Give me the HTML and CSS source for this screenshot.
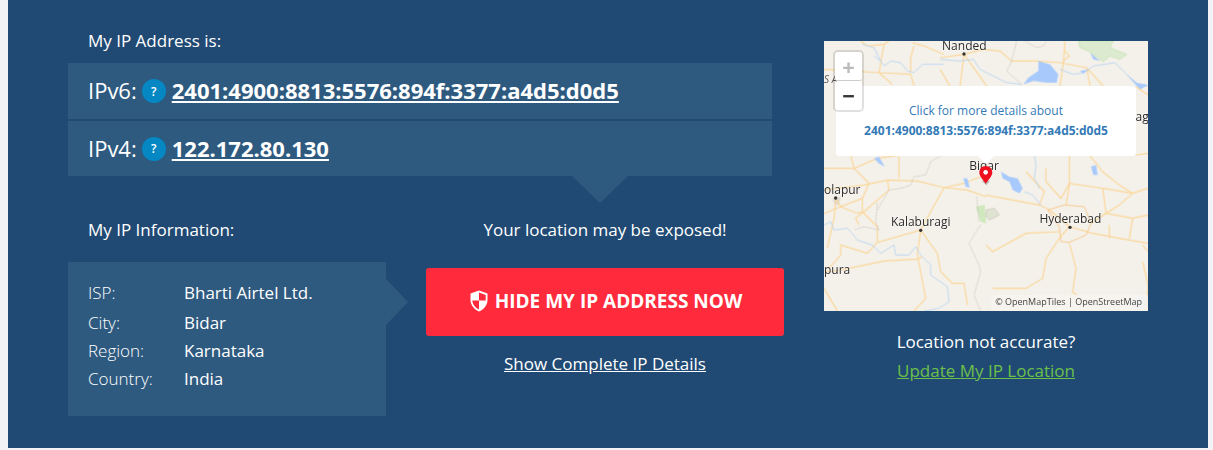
FILE: index.html
```html
<!DOCTYPE html>
<html lang="en">
<head>
    <meta charset="UTF-8">
    <title>My IP Address</title>
    <link rel="stylesheet" href="styles.css">
</head>
<body>
    <div class="panel">
        <div class="main">
            <div class="label label-top">My IP Address is:</div>
            <div class="ip-row">
                <span class="ip-name">IPv6:</span>
                <span class="help">?</span>
                <a class="ip-value" href="#">2401:4900:8813:5576:894f:3377:a4d5:d0d5</a>
            </div>
            <div class="ip-row ip-row-last">
                <span class="ip-name">IPv4:</span>
                <span class="help">?</span>
                <a class="ip-value" href="#">122.172.80.130</a>
            </div>
            <div class="lower">
                <div class="info-col">
                    <div class="label label-info">My IP Information:</div>
                    <div class="info-box">
                        <div class="info-line info-line-first"><span class="info-key">ISP:</span><span class="info-val">Bharti Airtel Ltd.</span></div>
                        <div class="info-line"><span class="info-key">City:</span><span class="info-val">Bidar</span></div>
                        <div class="info-line"><span class="info-key">Region:</span><span class="info-val">Karnataka</span></div>
                        <div class="info-line"><span class="info-key">Country:</span><span class="info-val">India</span></div>
                    </div>
                </div>
                <div class="action-col">
                    <div class="exposed">Your location may be exposed!</div>
                    <a class="hide-btn" href="#">
                        <svg class="shield" width="18" height="22" viewBox="0 0 18 22">
                            <path d="M9 0.5 L17.5 3.5 V10 C17.5 15.5 13.5 19.5 9 21.5 C4.5 19.5 0.5 15.5 0.5 10 V3.5 Z" fill="#fff"/>
                            <path d="M9 2.6 L15.7 4.9 V10.5 H9 Z M9 10.5 V19.5 C5.6 17.8 2.7 14.6 2.3 10.5 Z" fill="#ff2b3c"/>
                        </svg>
                        HIDE MY IP ADDRESS NOW
                    </a>
                    <a class="details-link" href="#">Show Complete IP Details</a>
                </div>
            </div>
        </div>
        <div class="side">
            <div class="map">
                <svg class="map-art" width="324" height="270" viewBox="12 33 972 810">
                    <defs>
                        <filter id="soft"><feGaussianBlur stdDeviation="0.7"/></filter>
                    </defs>
                    <rect x="12" y="33" width="972" height="810" fill="#f4f1ea"/>
                    <g filter="url(#soft)">
                        <!-- top left of the map -->
                        <g transform="translate(12,33)">
                            <g class="road">
                                <path d="M110 0 L130 15 L180 10 L195 0"/>
                                <path d="M180 10 L165 95 L90 90 L0 85"/>
                                <path d="M165 95 L205 130"/>
                                <path d="M165 95 L260 100 L270 135"/>
                                <path d="M270 15 L260 50 L260 95"/>
                                <path d="M265 5 L300 15 L360 40"/>
                            </g>
                            <g class="river">
                                <path d="M115 10 L150 20 L170 60 L180 75 L200 60 L230 65 L250 90 L270 95 L295 70 L360 70"/>
                                <path d="M150 45 L170 60"/>
                            </g>
                        </g>
                        <!-- top right of the map -->
                        <g transform="translate(360,33)">
                            <path d="M415 0 L520 0 L510 20 L560 40 L540 55 L510 45 L490 62 L445 30 L420 20 Z" fill="#dcebd0" stroke="#bfe0a8" stroke-width="2"/>
                            <g class="road">
                                <path d="M0 50 L72 40"/>
                                <path d="M72 40 L60 135"/>
                                <path d="M72 40 L140 135"/>
                                <path d="M72 40 L130 25 L180 30 L215 60 L290 60 L360 65 L440 80 L490 135"/>
                                <path d="M0 85 L30 135"/>
                                <path d="M375 0 L370 65 L360 135"/>
                                <path d="M375 30 L388 45 L370 60"/>
                                <path d="M440 80 L450 135"/>
                            </g>
                            <g class="river">
                                <path d="M0 55 L60 60 L100 55 L120 85 L200 125 L245 130"/>
                                <path d="M360 85 L400 100 L430 95 L460 75 L525 65 L560 100 L590 130 L624 135"/>
                            </g>
                            <g class="water">
                                <path d="M265 110 L295 90 L295 60 L330 70 L355 100 L350 125 L320 125 L280 120 L250 130 Z"/>
                                <path d="M450 35 L480 60 L460 55 Z"/>
                                <path d="M420 90 L445 86 L430 98 Z"/>
                                <path d="M560 100 L590 125 L624 132 L600 146 Z"/>
                            </g>
                            <g class="border">
                                <path d="M230 0 L215 60 L200 90 L245 130"/>
                                <path d="M255 0 L290 20 L310 15 L320 0"/>
                            </g>
                        </g>
                        <!-- right edge, beside the popup -->
                        <g class="road">
                            <path d="M948 170 L984 195"/>
                            <path d="M948 375 L984 370"/>
                        </g>
                        <!-- bottom left of the map -->
                        <g transform="translate(12,375)">
                            <path d="M455 155 L482 150 L486 205 L470 200 Z" fill="#cfe8bd"/>
                            <path d="M25 130 L50 125 L45 150 L32 150 Z" fill="#ddd9d2"/>
                            <g class="road">
                                <path d="M0 105 L120 90 L190 75 L280 78 L360 98 L420 85 L470 65"/>
                                <path d="M360 98 L430 105 L486 125"/>
                                <path d="M80 0 L90 40 L135 85 L115 130 L115 170 L160 215 L160 262"/>
                                <path d="M0 40 L90 40 L160 10 L230 0"/>
                                <path d="M225 5 L225 70"/>
                                <path d="M0 175 L50 155 L115 130"/>
                                <path d="M35 130 L50 155 L100 175 L115 170"/>
                                <path d="M190 75 L195 105 L120 170 L95 190 L105 210"/>
                                <path d="M360 98 L320 170 L290 225"/>
                                <path d="M290 225 L160 262 L130 295 L50 270 L50 300 L15 340"/>
                                <path d="M0 350 L50 345 L180 318 L280 312 L295 305"/>
                                <path d="M290 225 L340 295 L350 350 L385 385 L420 385 L430 450"/>
                                <path d="M290 225 L280 300 L305 430 L270 468"/>
                                <path d="M35 130 L30 190 L10 280"/>
                                <path d="M0 400 L40 468"/>
                            </g>
                            <g class="border">
                                <path d="M160 145 L155 200 L165 225 L120 215 L90 225"/>
                                <path d="M160 165 L195 105 L230 100 L260 90 L270 65 L305 60 L320 20 L355 0"/>
                                <path d="M470 210 L450 240 L435 265 L465 330 L470 350 L450 420 L470 468"/>
                                <path d="M458 125 L465 200"/>
                            </g>
                            <g class="river">
                                <path d="M0 210 L20 200 L30 225 L70 220 L85 235 L100 255 L145 270 L170 295 L210 270 L215 300 L255 300 L275 275 L290 300 L320 330 L320 360 L370 395 L375 440 L345 460 L300 468"/>
                            </g>
                            <g class="water">
                                <path d="M150 10 L165 5 L182 35 L165 25 Z"/>
                                <path d="M418 70 L430 70 L437 98 L425 95 Z"/>
                            </g>
                        </g>
                        <!-- bottom right of the map -->
                        <g transform="translate(498,375)">
                            <path d="M0 165 L25 160 L40 180 L10 195 L0 185 Z" fill="#dfe3d2" stroke="#c4c2b8" stroke-width="2"/>
                            <path d="M440 440 L470 420 L486 450 L450 468 Z" fill="#cfe0f5"/>
                            <g class="road">
                                <path d="M0 120 L160 150 L190 165 L250 215"/>
                                <path d="M250 215 L320 235 L400 250 L486 265"/>
                                <path d="M250 215 L220 250 L180 310 L170 370 L120 400 L20 400"/>
                                <path d="M0 270 L20 290 L120 235 L220 230"/>
                                <path d="M250 265 L270 340 L260 410 L290 440"/>
                                <path d="M250 0 L250 90 L240 150"/>
                                <path d="M180 40 L180 80 L225 130 L250 85 L350 100 L360 175"/>
                                <path d="M350 100 L440 115 L486 100"/>
                                <path d="M360 175 L400 150 L440 115"/>
                                <path d="M315 205 L360 175 L440 190 L486 180"/>
                                <path d="M370 210 L370 250"/>
                                <path d="M120 50 L175 110 L160 150"/>
                                <path d="M310 0 L350 50 L400 90 L440 115"/>
                                <path d="M440 190 L430 250"/>
                                <path d="M470 270 L486 290"/>
                                <path d="M470 320 L486 390 L480 468"/>
                            </g>
                            <path d="M185 165 L235 150 L295 155 L315 205 L300 240 L250 262 L225 260 L220 215 Z" fill="none" stroke="#f6c98f" stroke-width="3"/>
                            <g class="river">
                                <path d="M115 110 L140 120 L165 150"/>
                                <path d="M145 0 L150 30 L145 70 L160 100"/>
                            </g>
                            <g class="water">
                                <path d="M45 50 L70 65 L95 70 L110 100 L100 115 L80 105 L70 80 L50 70 Z"/>
                                <path d="M315 35 L330 30 L335 60 L322 60 Z"/>
                            </g>
                        </g>
                    </g>
                    <rect x="514" y="795" width="470" height="48" fill="#f7f5f1" opacity="0.85"/>
                    <g class="map-label">
                        <text x="433" y="60" text-anchor="middle">Nanded</text>
                        <text x="492" y="421" text-anchor="middle">Bidar</text>
                        <text x="12" y="491">olapur</text>
                        <text x="302" y="588" text-anchor="middle">Kalaburagi</text>
                        <text x="751" y="580" text-anchor="middle">Hyderabad</text>
                        <text x="12" y="733">pura</text>
                        <text x="986" y="274" text-anchor="end">Nag</text>
                        <text class="map-state" x="12" y="160">S A</text>
                    </g>
                    <g fill="#333">
                        <circle cx="432" cy="72" r="5"/>
                        <circle cx="47" cy="504" r="5"/>
                        <circle cx="302" cy="601" r="5"/>
                        <circle cx="750" cy="592" r="5"/>
                    </g>
                    <path d="M485 452 L510 452 L499 466 Z" fill="#9d9a94" opacity="0.7"/>
                    <path d="M497 408 C484 408 478 418 478 428 C478 438 490 450 497 461 C504 450 517 438 517 428 C517 418 510 408 497 408 Z" fill="#ee0f1f"/>
                    <circle cx="497" cy="427" r="7" fill="#fff"/>
                </svg>
                <div class="attrib">© OpenMapTiles | OpenStreetMap</div>
                <div class="zoom-ctl">
                    <div class="zoom-btn zoom-off">+</div>
                    <div class="zoom-btn">−</div>
                </div>
                <a class="popup" href="#">
                    <span class="popup-line">Click for more details about</span>
                    <span class="popup-ip">2401:4900:8813:5576:894f:3377:a4d5:d0d5</span>
                </a>
            </div>
            <div class="map-note">Location not accurate?</div>
            <a class="map-link" href="#">Update My IP Location</a>
        </div>
    </div>
</body>
</html>
```

FILE: styles.css
```css
* { box-sizing: border-box; }
body { margin: 0; height: 450px; overflow: hidden; background-color: #f2f3f5; font-family: "Open Sans", Arial, sans-serif; color: #fff; }
a { color: inherit; }

.panel { display: flex; width: 1200px; height: 448px; margin-left: 8px; padding: 0 60px; background-color: #204a73; }
.main { width: 704px; }
.side { width: 324px; margin-left: 52px; padding-top: 41px; text-align: center; }

.label { padding-left: 20px; font-size: 17px; line-height: 22px; }
.label-top { padding-top: 30px; height: 63px; }
.label-info { height: 86px; padding-top: 43px; }

.ip-row { display: flex; align-items: center; height: 56px; margin-bottom: 2px; padding: 0 0 2px 20px; background-color: #2e5a80; }
.ip-row-last { position: relative; height: 55px; margin-bottom: 0; }
.ip-row-last::after { content: ""; position: absolute; left: 504px; top: 100%; border-style: solid; border-width: 27px 28px 0; border-color: #2e5a80 transparent transparent; }
.ip-name { font-size: 22px; }
.help { display: flex; align-items: center; justify-content: center; width: 24px; height: 24px; margin: 2px 6px 0 5px; border-radius: 50%; background-color: #0587c3; font-size: 12px; font-weight: 600; }
.ip-value { font-size: 22px; font-weight: 700; }

.lower { display: flex; gap: 40px; width: 716px; }
.info-col { width: 318px; }
.info-box { position: relative; height: 154px; padding: 17px 20px 0; background-color: #2e5a80; font-size: 17px; }
.info-box::after { content: ""; position: absolute; left: 100%; top: 17px; border-style: solid; border-width: 23px 0 23px 22px; border-color: transparent transparent transparent #2e5a80; }
.info-line { display: flex; height: 28px; line-height: 28px; }
.info-line-first { margin-bottom: 1.5px; }
.info-key { width: 96px; font-weight: 300; }

.action-col { width: 358px; padding-top: 43px; text-align: center; }
.exposed { font-size: 17px; line-height: 22px; }
.hide-btn { display: flex; align-items: center; justify-content: center; gap: 7px; height: 68px; margin-top: 27px; padding: 0 0 2px 2px; border-radius: 3px; background-color: #ff2b3c; font-size: 19px; font-weight: 700; text-decoration: none; }
.details-link { display: inline-block; margin-top: 17px; font-size: 17px; line-height: 22px; }

.map { position: relative; width: 324px; height: 270px; overflow: hidden; }
.map-art { display: block; }
.road path { fill: none; stroke: #fbd698; stroke-width: 3.5; }
.river path { fill: none; stroke: #b5d2f3; stroke-width: 2.5; }
.water path { fill: #a8c9fb; }
.border path { fill: none; stroke: #c6c3b9; stroke-width: 2.5; stroke-dasharray: 5 3; }
.map-label text { font-family: "Open Sans", Arial, sans-serif; font-size: 36px; fill: #2a2a2a; stroke: rgba(255, 255, 255, 0.5); stroke-width: 3px; paint-order: stroke; }
.map-label .map-state { font-size: 30px; font-style: italic; fill: #555; }
.attrib { position: absolute; right: 6px; bottom: 3px; font-size: 9px; line-height: 12px; color: #444; white-space: nowrap; }
.zoom-ctl { position: absolute; left: 9px; top: 9px; z-index: 2; width: 31px; border: 2px solid rgba(0, 0, 0, 0.12); border-radius: 5px; background-clip: padding-box; }
.zoom-btn { height: 29px; background-color: #fff; color: #333; font-size: 22px; font-weight: 700; line-height: 28px; text-align: center; border-radius: 3px; }
.zoom-off { color: #bbb; border-bottom: 1px solid #ccc; }
.popup { position: absolute; left: 12px; top: 45px; width: 300px; height: 70px; padding-top: 17px; border-radius: 4px; background-color: #fff; color: #337ab7; text-align: center; text-decoration: none; }
.popup::after { content: ""; position: absolute; left: 142px; top: 100%; border-style: solid; border-width: 8px 8px 0; border-color: #fff transparent transparent; }
.popup-line { display: block; font-size: 12px; line-height: 16px; }
.popup-ip { display: block; margin-top: 4px; font-size: 12px; font-weight: 700; line-height: 16px; }

.map-note { margin-top: 20px; font-size: 17px; line-height: 22px; }
.map-link { display: inline-block; margin-top: 7px; color: #6cc04a; font-size: 17px; line-height: 22px; }
```
